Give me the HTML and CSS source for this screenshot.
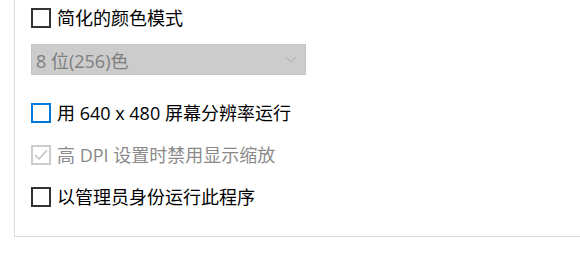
FILE: index.html
```html
<!DOCTYPE html>
<html lang="zh-CN">
<head>
    <meta charset="UTF-8">
    <title>兼容性设置</title>
    <link rel="stylesheet" href="styles.css">
</head>
<body>
    <div class="panel">
        <div class="option">
            <span class="box"></span>
            <span class="label">简化的颜色模式</span>
        </div>
        <div class="select disabled">
            <span class="select-text">8 位(256)色</span>
            <svg class="chevron" width="10" height="6" viewBox="0 0 10 6">
                <polyline points="0.5,0.5 5,5 9.5,0.5" fill="none" stroke="#a6a6a6" stroke-width="1"/>
            </svg>
        </div>
        <div class="option gap-big">
            <span class="box focus"></span>
            <span class="label">用 640 x 480 屏幕分辨率运行</span>
        </div>
        <div class="option gap disabled">
            <span class="box">
                <svg width="16" height="16" viewBox="0 0 16 16">
                    <polyline points="2,8 6,12 14,3" fill="none" stroke="#bdbdbd" stroke-width="1.3"/>
                </svg>
            </span>
            <span class="label">高 DPI 设置时禁用显示缩放</span>
        </div>
        <div class="option gap">
            <span class="box"></span>
            <span class="label">以管理员身份运行此程序</span>
        </div>
    </div>
</body>
</html>
```

FILE: styles.css
```css
body {
    margin: 0;
    background-color: #fff;
    font-family: "Open Sans", "Noto Sans CJK SC", sans-serif;
    font-size: 18px;
    color: #000;
    overflow: hidden;
}
.panel {
    margin-left: 14px;
    padding: 8px 0 29px 16px;
    border-left: 1px solid #dcdcdc;
    border-bottom: 1px solid #dcdcdc;
}
.option {
    display: flex;
    align-items: center;
    height: 20px;
}
.gap-big {
    margin-top: 28px;
}
.gap {
    margin-top: 22px;
}
.box {
    box-sizing: border-box;
    width: 20px;
    height: 20px;
    border: 2px solid #333;
    display: flex;
    align-items: center;
    justify-content: center;
    flex-shrink: 0;
}
.box.focus {
    border-color: #0078d7;
}
.label {
    margin-left: 6px;
    line-height: 20px;
    white-space: nowrap;
}
.option.disabled .box {
    border-color: #cccccc;
}
.option.disabled .label {
    color: #8a8a8a;
}
.select {
    box-sizing: border-box;
    margin-top: 16px;
    width: 275px;
    height: 31px;
    background-color: #cccccc;
    border: 1px solid #c4c4c4;
    display: flex;
    align-items: center;
    justify-content: space-between;
    padding: 0 9px 0 4px;
}
.select-text {
    color: #7f7f7f;
    white-space: nowrap;
}
```
